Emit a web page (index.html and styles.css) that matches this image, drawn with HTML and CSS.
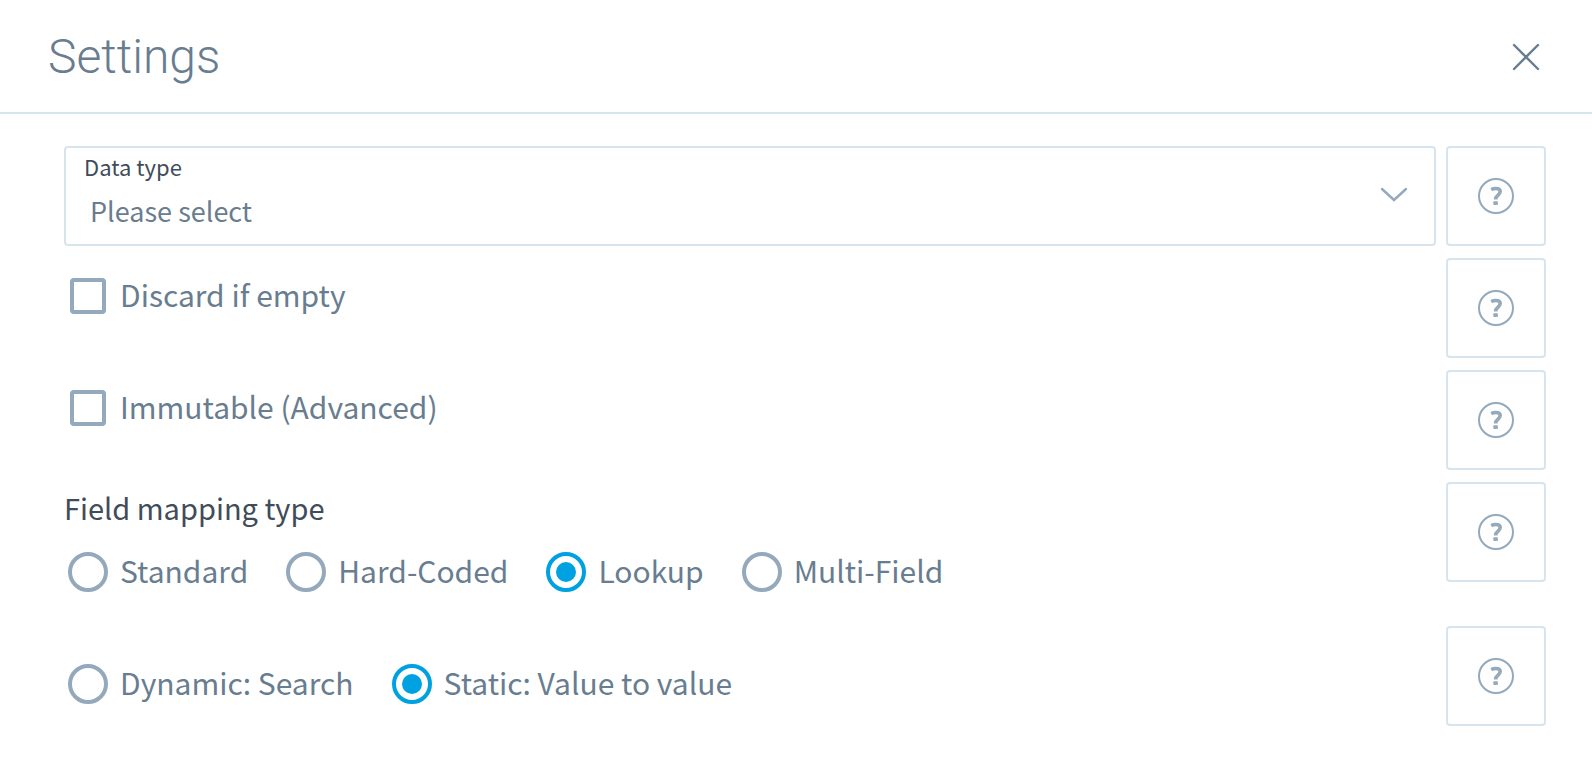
FILE: index.html
```html
<!DOCTYPE html>
<html lang="en">

<head>
    <title>Settings</title>
    <meta charset="UTF-8">
    <link rel="stylesheet" href="styles.css">
</head>

<body>
    <svg class="sprite" aria-hidden="true">
        <symbol id="icon-help" viewBox="0 0 38 38">
            <circle cx="19" cy="19" r="17" fill="none" stroke="currentColor" stroke-width="2" />
            <path d="M14.2 12.6C15.6 11.9 17.2 11.5 18.7 11.5C21.4 11.5 23.2 12.5 23.2 14.6C23.2 18 18.6 18.4 18.6 22.4" fill="none" stroke="currentColor" stroke-width="3.6" />
            <rect x="16.3" y="24.2" width="4.6" height="3.8" rx="1" fill="currentColor" />
        </symbol>
    </svg>

    <div class="header">
        <h1>Settings</h1>
        <button type="button" class="close" aria-label="Close">
            <svg width="28" height="28" viewBox="0 0 28 28"><path d="M2 2L26 26M26 2L2 26" /></svg>
        </button>
    </div>

    <form class="settings-form">
        <div class="row">
            <div class="select-field">
                <label for="dataType">Data type</label>
                <select id="dataType" name="dataType">
                    <option value="">Please select</option>
                </select>
                <svg class="chevron" width="28" height="16" viewBox="0 0 28 16"><path d="M2 2L14 13L26 2" /></svg>
            </div>
            <button type="button" class="help" aria-label="Help"><svg><use href="#icon-help" /></svg></button>
        </div>

        <div class="row">
            <div class="options checks">
                <label><input type="checkbox" name="discard"><span>Discard if empty</span></label>
            </div>
            <button type="button" class="help" aria-label="Help"><svg><use href="#icon-help" /></svg></button>
        </div>

        <div class="row">
            <div class="options checks">
                <label><input type="checkbox" name="immutable"><span>Immutable (Advanced)</span></label>
            </div>
            <button type="button" class="help" aria-label="Help"><svg><use href="#icon-help" /></svg></button>
        </div>

        <div class="row">
            <fieldset class="mapping">
                <legend>Field mapping type</legend>
                <div class="options">
                    <label><input type="radio" name="mapping" value="standard"><span>Standard</span></label>
                    <label><input type="radio" name="mapping" value="hard"><span>Hard-Coded</span></label>
                    <label><input type="radio" name="mapping" value="lookup" checked><span>Lookup</span></label>
                    <label><input type="radio" name="mapping" value="multi"><span>Multi-Field</span></label>
                </div>
            </fieldset>
            <button type="button" class="help" aria-label="Help"><svg><use href="#icon-help" /></svg></button>
        </div>

        <div class="row">
            <div class="options lookup">
                <label><input type="radio" name="lookup" value="dynamic"><span>Dynamic: Search</span></label>
                <label><input type="radio" name="lookup" value="static" checked><span>Static: Value to value</span></label>
            </div>
            <button type="button" class="help" aria-label="Help"><svg><use href="#icon-help" /></svg></button>
        </div>
    </form>
</body>

</html>
```
FILE: styles.css
```css
* {
    box-sizing: border-box;
}

body {
    margin: 0;
    background-color: #fff;
    color: #687d8f;
    font-family: "Noto Sans CJK SC", "Noto Sans", sans-serif;
    font-size: 30px;
    line-height: 36px;
}

.sprite {
    display: none;
}

/* Header */
.header {
    display: flex;
    justify-content: space-between;
    align-items: center;
    height: 114px;
    padding: 2px 52px 0 48px;
    border-bottom: 2px solid #d6e4ee;
}

h1 {
    margin: 0;
    font-family: Roboto, sans-serif;
    font-size: 48px;
    font-weight: 300;
    line-height: 56px;
}

button {
    display: flex;
    align-items: center;
    justify-content: center;
    padding: 0;
    background: none;
    border: none;
    cursor: pointer;
}

.close svg {
    fill: none;
    stroke: #687d8f;
    stroke-width: 2.4;
    stroke-linecap: round;
}

/* Form rows */
.settings-form {
    display: flex;
    flex-direction: column;
    gap: 12px;
    padding: 32px 46px 32px 64px;
}

.row {
    display: flex;
    align-items: flex-start;
    gap: 10px;
}

.row > :first-child {
    flex: 1;
    min-width: 0;
}

.help {
    flex: none;
    width: 100px;
    height: 100px;
    border: 2px solid #d6e4ee;
    border-radius: 4px;
    color: #94a9bc;
}

.help svg {
    width: 38px;
    height: 38px;
}

/* Select with its label inside the box */
.select-field {
    position: relative;
}

.select-field label {
    position: absolute;
    top: 6px;
    left: 20px;
    color: #3f4c59;
    font-size: 22px;
    line-height: 28px;
}

select {
    display: block;
    width: 100%;
    height: 100px;
    padding: 28px 60px 0 24px;
    appearance: none;
    background-color: #fff;
    border: 2px solid #d6e4ee;
    border-radius: 4px;
    color: inherit;
    font-family: inherit;
    font-size: 27px;
}

.chevron {
    position: absolute;
    top: 41px;
    right: 28px;
    fill: none;
    stroke: #94a9bc;
    stroke-width: 2.4;
    stroke-linecap: round;
    pointer-events: none;
}

/* Check boxes and radios */
.options {
    display: flex;
    flex-wrap: wrap;
    gap: 38px;
    padding-left: 4px;
}

.options label {
    display: flex;
    align-items: center;
    gap: 12px;
}

.options span {
    padding-bottom: 4px;
}

.checks {
    padding: 18px 0 0 6px;
}

.checks label {
    gap: 14px;
}

.lookup {
    padding-top: 38px;
}

input {
    flex: none;
    width: 40px;
    height: 40px;
    margin: 0;
    appearance: none;
    border: 4px solid #94a9bc;
    border-radius: 50%;
}

input[type='checkbox'] {
    width: 36px;
    height: 36px;
    border-radius: 4px;
}

input[type='radio']:checked {
    padding: 6px;
    border-color: #00a1e0;
    background-color: #00a1e0;
    background-clip: content-box;
}

.mapping {
    margin: 0;
    padding: 0 0 22px;
    border: none;
}

legend {
    padding: 7px 0 27px;
    color: #3f4c59;
    font-size: 29px;
}
```
